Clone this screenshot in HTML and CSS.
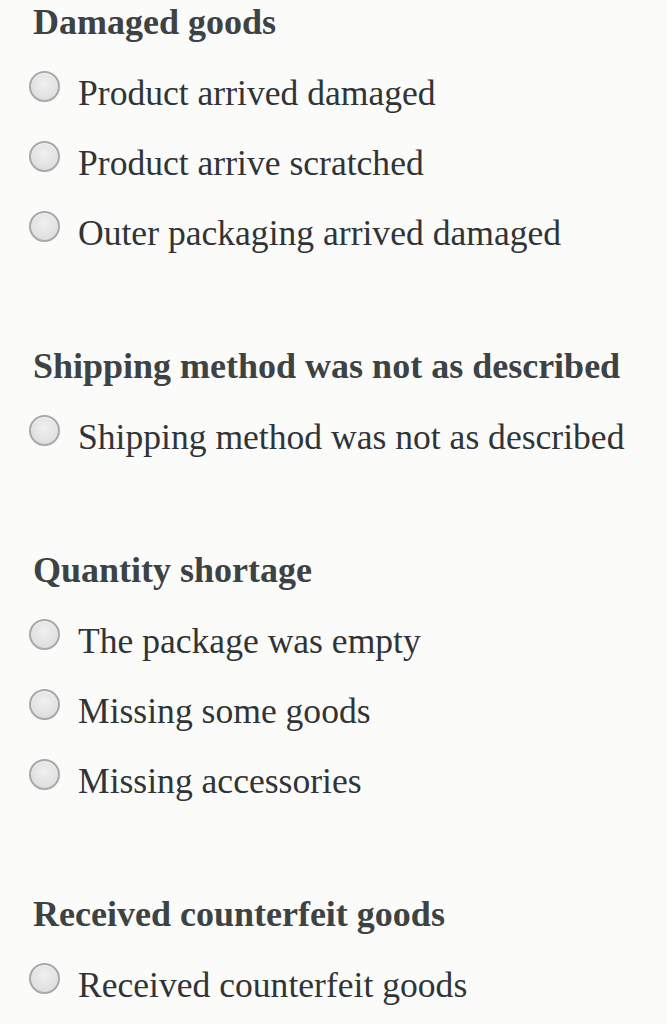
FILE: index.html
```html
<!DOCTYPE html>
<html>
<head>
<meta charset="utf-8">
<link rel="stylesheet" href="styles.css">
</head>
<body>
<form class="reasons">
  <section class="group">
    <h3 class="group-title">Damaged goods</h3>
    <label class="option"><span class="radio"></span>Product arrived damaged</label>
    <label class="option"><span class="radio"></span>Product arrive scratched</label>
    <label class="option"><span class="radio"></span>Outer packaging arrived damaged</label>
  </section>
  <section class="group">
    <h3 class="group-title">Shipping method was not as described</h3>
    <label class="option"><span class="radio"></span>Shipping method was not as described</label>
  </section>
  <section class="group">
    <h3 class="group-title">Quantity shortage</h3>
    <label class="option"><span class="radio"></span>The package was empty</label>
    <label class="option"><span class="radio"></span>Missing some goods</label>
    <label class="option"><span class="radio"></span>Missing accessories</label>
  </section>
  <section class="group">
    <h3 class="group-title">Received counterfeit goods</h3>
    <label class="option"><span class="radio"></span>Received counterfeit goods</label>
  </section>
</form>
</body>
</html>
```
FILE: styles.css
```css
html, body {
  margin: 0;
  padding: 0;
  background: #fbfbfa;
}
body {
  font-family: "Liberation Serif", "Times New Roman", serif;
  color: #303436;
  font-size: 35.6px;
}
.reasons {
  display: flex;
  flex-direction: column;
  gap: 76px;
  padding: 0 0 0 33px;
}
.group {
  display: flex;
  flex-direction: column;
}
.group-title {
  margin: 0 0 14px 0;
  font-size: 36px;
  line-height: 44px;
  font-weight: bold;
  color: #3d4244;
}
.option {
  display: flex;
  align-items: center;
  height: 70px;
  line-height: 70px;
  margin-left: -4px;
}
.radio {
  flex: none;
  width: 31px;
  height: 31px;
  border-radius: 50%;
  box-sizing: border-box;
  border: 2px solid #a9a9a9;
  background: radial-gradient(circle at 50% 40%, #f0f0f0 0%, #e2e2e2 60%, #d6d6d6 100%);
  box-shadow: inset 0 1px 1px rgba(255,255,255,0.8);
  margin: 0 18px 14px 0;
}
```
